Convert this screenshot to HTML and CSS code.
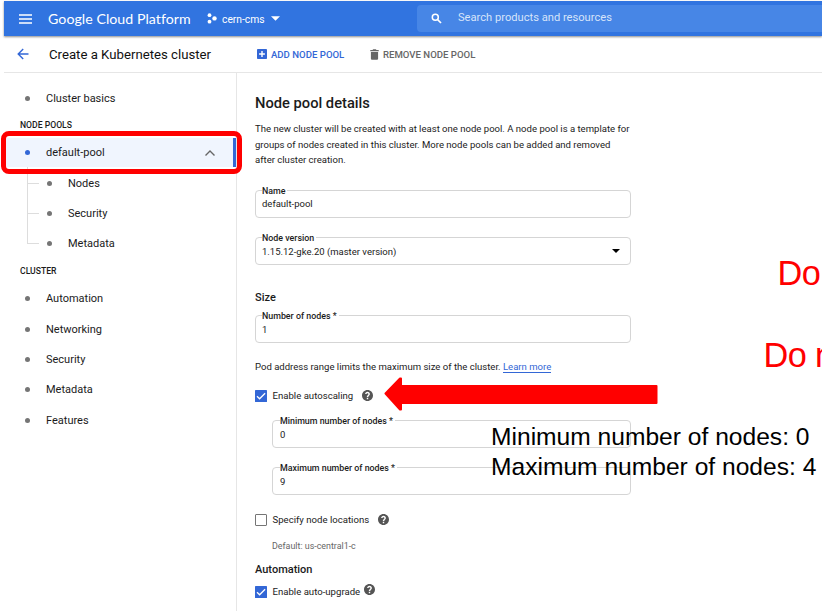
FILE: index.html
```html
<!DOCTYPE html>
<html lang="en">
<head>
<meta charset="utf-8">
<title>Create a Kubernetes cluster</title>
<link rel="stylesheet" href="styles.css">
</head>
<body>
<svg width="0" height="0" class="defs" aria-hidden="true">
  <symbol id="help" viewBox="2 2 20 20"><path fill="#555" d="M12 2C6.48 2 2 6.48 2 12s4.48 10 10 10 10-4.48 10-10S17.52 2 12 2zm1.300 17h-2.600v-2.600h2.600V19zm2.200-7.600l-.9.900c-.8.800-1.300 1.500-1.300 2.900h-2.600v-.5c0-1.100.5-2.100 1.200-2.800l1.200-1.300c.4-.3.600-.8.600-1.300 0-.9-.7-1.600-1.700-1.600s-1.800.7-1.800 1.700H7.700c0-2.300 1.900-4.200 4.300-4.200s4.300 1.800 4.300 4c0 .9-.3 1.700-.8 2.200z"/></symbol>
  <symbol id="checked" viewBox="0 0 12 12"><rect width="12" height="12" rx=".6" fill="#3367d6"/><path d="M2 6.300 4.600 8.800 10.100 3.200" fill="none" stroke="#fff" stroke-width="1.300"/></symbol>
</svg>
<div class="page">
  <header class="topbar">
    <svg class="menu" viewBox="0 0 13 10"><path d="M0 1h13M0 5h13M0 9h13" stroke="#fff" stroke-width="1.400"/></svg>
    <span class="brand">Google Cloud Platform</span>
    <svg class="project-icon" viewBox="0 0 10 11"><g fill="#fff"><circle cx="2.500" cy="2.200" r="1.900"/><circle cx="7.500" cy="5.400" r="2.200"/><circle cx="2.500" cy="8.700" r="1.900"/></g></svg>
    <span class="project">cern-cms</span>
    <svg class="project-caret" viewBox="0 0 10 5"><path d="M0 0h10L5 5z" fill="#fff"/></svg>
    <div class="search">
      <svg class="search-icon" viewBox="0 0 11 11"><circle cx="4.300" cy="4.300" r="3" fill="none" stroke="#fff" stroke-width="1.500"/><path d="M6.500 6.500 10 10" stroke="#fff" stroke-width="1.700"/></svg>
      <span>Search products and resources</span>
    </div>
  </header>
  <div class="toolbar">
    <svg class="back" viewBox="0 0 12 12"><path d="M11.500 6H1.500M6.200 1 1.200 6l5 5" fill="none" stroke="#3367d6" stroke-width="1.400"/></svg>
    <h1>Create a Kubernetes cluster</h1>
    <div class="action add"><svg viewBox="0 0 10 10"><rect width="10" height="10" rx=".8" fill="#3367d6"/><path d="M5 2.100v5.800M2.100 5h5.800" stroke="#fff" stroke-width="1.400"/></svg><span>ADD NODE POOL</span></div>
    <div class="action remove"><svg viewBox="0 0 9 11"><path d="M.3 1h2.200l.7-.8h2.600l.7.800h2.200v1.300H.3zM.9 3h7.200v6.700q0 1.100-1.100 1.100H2q-1.100 0-1.100-1.100z" fill="#666"/></svg><span>REMOVE NODE POOL</span></div>
  </div>
  <div class="body">
    <nav class="sidebar">
      <div class="item"><i></i>Cluster basics</div>
      <div class="section pools">NODE POOLS</div>
      <div class="item active"><i></i>default-pool
        <svg class="chevron" viewBox="0 0 10 6"><path d="M.5 5.500 5 1l4.500 4.500" fill="none" stroke="#666" stroke-width="1.400"/></svg>
      </div>
      <div class="children">
        <div class="item"><i></i>Nodes</div>
        <div class="item"><i></i>Security</div>
        <div class="item"><i></i>Metadata</div>
      </div>
      <div class="section cluster">CLUSTER</div>
      <div class="item"><i></i>Automation</div>
      <div class="item"><i></i>Networking</div>
      <div class="item"><i></i>Security</div>
      <div class="item"><i></i>Metadata</div>
      <div class="item"><i></i>Features</div>
    </nav>
    <main>
      <h2>Node pool details</h2>
      <p class="intro">The new cluster will be created with at least one node pool. A node pool is a template for<br>groups of nodes created in this cluster. More node pools can be added and removed<br>after cluster creation.</p>
      <fieldset class="field name"><legend>Name</legend><span>default-pool</span></fieldset>
      <fieldset class="field version"><legend>Node version</legend><span>1.15.12-gke.20 (master version)</span><svg class="caret" viewBox="0 0 8 4"><path d="M0 0h8L4 4z"/></svg></fieldset>
      <h3 class="size">Size</h3>
      <fieldset class="field"><legend>Number of nodes *</legend><span>1</span></fieldset>
      <p class="hint">Pod address range limits the maximum size of the cluster. <a>Learn more</a></p>
      <div class="check autoscale"><svg class="box"><use href="#checked"/></svg><span>Enable autoscaling</span><svg class="help"><use href="#help"/></svg></div>
      <div class="limits">
        <fieldset class="field"><legend>Minimum number of nodes *</legend><span>0</span></fieldset>
        <fieldset class="field max"><legend>Maximum number of nodes *</legend><span>9</span></fieldset>
      </div>
      <div class="check locations"><b class="box empty"></b><span>Specify node locations</span><svg class="help"><use href="#help"/></svg></div>
      <p class="default">Default: us-central1-c</p>
      <h3>Automation</h3>
      <div class="check upgrade"><svg class="box"><use href="#checked"/></svg><span>Enable auto-upgrade</span><svg class="help"><use href="#help"/></svg></div>
    </main>
  </div>
</div>
<div class="highlight"></div>
<svg class="arrow" viewBox="0 0 274 34"><path d="M1.500 16.500 16 1.500h1V9h255.500v17H17v6.500h-1z" fill="red" stroke="red" stroke-width="2" stroke-linejoin="round"/></svg>
<div class="note red first">Do</div>
<div class="note red second">Do n</div>
<div class="note values">Minimum number of nodes: 0<br>Maximum number of nodes: 4</div>
</body>
</html>
```
FILE: styles.css
```css
* { box-sizing: border-box; }
html, body { margin: 0; height: 611px; overflow: hidden; background: #fff; }
body { position: relative; width: 822px; font-family: Roboto, "Liberation Sans", sans-serif; color: #1b1b1b; }
h1, h2, h3, p { margin: 0; }
svg { display: block; flex: none; }
.defs { position: absolute; }
.page { padding: 1px 0 0 4px; }

.topbar { position: relative; display: flex; align-items: center; height: 35px; padding-left: 15px; background: #3174e0; box-shadow: 0 1px 2px rgba(0,0,0,.45); color: #fff; }
.menu { width: 13px; height: 10px; margin-right: 16px; }
.brand { width: 159px; font: 14.200px/20px Lato, sans-serif; letter-spacing: .03px; white-space: nowrap; }
.project-icon { width: 10px; height: 11px; margin-right: 5px; }
.project { width: 49px; padding-top: 1px; font-size: 10.300px; white-space: nowrap; }
.project-caret { width: 9px; height: 5px; }
.search { display: flex; align-items: center; flex: 1; height: 27px; margin-left: 137px; padding-left: 14px; border-radius: 4px 0 0 4px; background: #4786e6; font-size: 11.150px; color: #d6e4fa; }
.search span { margin-top: -2px; }
.search-icon { width: 11px; height: 11px; margin-right: 16px; }

.toolbar { display: flex; align-items: center; height: 37px; padding-left: 13px; border-bottom: 1px solid #e6e6e6; }
.back { width: 12px; height: 12px; margin-right: 20px; }
h1 { width: 208px; font-size: 13.200px; font-weight: 400; color: #111; white-space: nowrap; }
.action { display: flex; align-items: center; font-size: 9.600px; font-weight: 500; white-space: nowrap; }
.add { width: 113px; color: #3367d6; }
.add svg { width: 10px; height: 10px; margin-right: 4px; }
.remove { color: #666; }
.remove svg { width: 9px; height: 11px; margin-right: 4px; }

.body { display: flex; height: 538px; }
.sidebar { width: 233px; padding-top: 10.200px; border-right: 1px solid #e6e6e6; font-size: 11px; }
.item { display: flex; align-items: center; height: 30.400px; padding-left: 21px; white-space: nowrap; }
.item i { width: 5px; height: 5px; margin-right: 16px; border-radius: 50%; background: #757575; }
.section { font-size: 8.650px; font-weight: 500; line-height: 12px; padding-left: 16px; }
.pools { margin: 5.500px 0 7px; }
.active { height: 29px; border-right: 3px solid #3367d6; background: #f0f5fe; }
.active i { background: #3367d6; }
.chevron { width: 10px; height: 6px; margin-left: auto; margin-right: 18px; }
.children { padding-top: .8px; padding-left: 22px; background: linear-gradient(#ddd,#ddd) 23px 0/1px 76px no-repeat; }
.children .item { background: linear-gradient(#ddd,#ddd) 1px center/12px 1px no-repeat; }
.cluster { margin: 5.700px 0 6.800px; }

main { padding: 20px 0 0 18px; width: 394px; font-size: 9.500px; }
h2 { font-size: 14.700px; font-weight: 500; line-height: 21px; }
.intro { margin-top: 7px; font-size: 9.550px; line-height: 15.500px; white-space: nowrap; }
.field { display: block; height: 33px; margin: 16px 0 0; padding: 0 6px; border: 1px solid #d5d5d5; border-radius: 4px; position: relative; min-width: 0; }
.field legend { padding: 0 2px 0 0; font-size: 8.850px; font-weight: 500; line-height: 12px; white-space: nowrap; }
.field > span { display: block; line-height: 16px; }
.name { margin-top: 17px; }
.name > span { line-height: 14px; }
.version { margin-top: 14px; }
.version > span { line-height: 15px; }
.caret { position: absolute; right: 10px; top: 5px; width: 8px; height: 4px; }
h3 { font-size: 11px; font-weight: 500; line-height: 14px; }
.size { margin-top: 26px; }
.size + .field { margin-top: 5px; }
.hint { margin-top: 16px; font-size: 9.550px; line-height: 15px; white-space: nowrap; }
.hint a { color: #3367d6; border-bottom: 1px solid #3367d6; }
.check { display: flex; align-items: center; height: 16px; font-size: 9.600px; }
.box { width: 12px; height: 12px; margin-right: 5.500px; }
.empty { border: 1.500px solid #757575; border-radius: 1px; }
.help { width: 11px; height: 11px; margin-left: 9px; }
.autoscale { margin-top: 14px; }
.limits { padding-left: 17px; }
.limits .field { margin-top: 11px; padding-left: 7px; }
.limits .field > span { line-height: 15px; }
.limits .max { margin-top: 14px; }
.locations { margin-top: 17px; }
.default { margin: 11px 0 10px 17px; font-size: 8.900px; line-height: 14px; color: #666; }
.upgrade { margin-top: 7px; }
.upgrade .help { margin-left: 3.500px; margin-top: -5px; }

.highlight { position: absolute; left: 1px; top: 131px; width: 241px; height: 43px; border: 5.500px solid red; border-radius: 8px; }
.arrow { position: absolute; left: 383.500px; top: 377px; width: 274px; height: 34px; }
.note { position: absolute; font-family: "Liberation Sans", Arial, sans-serif; white-space: nowrap; }
.red { color: red; font-size: 34.300px; letter-spacing: -.6px; line-height: 40px; }
.first { left: 777.500px; top: 253px; }
.second { left: 763.500px; top: 335px; }
.values { left: 491px; top: 422px; color: #000; font-size: 24.600px; line-height: 30px; }
```
